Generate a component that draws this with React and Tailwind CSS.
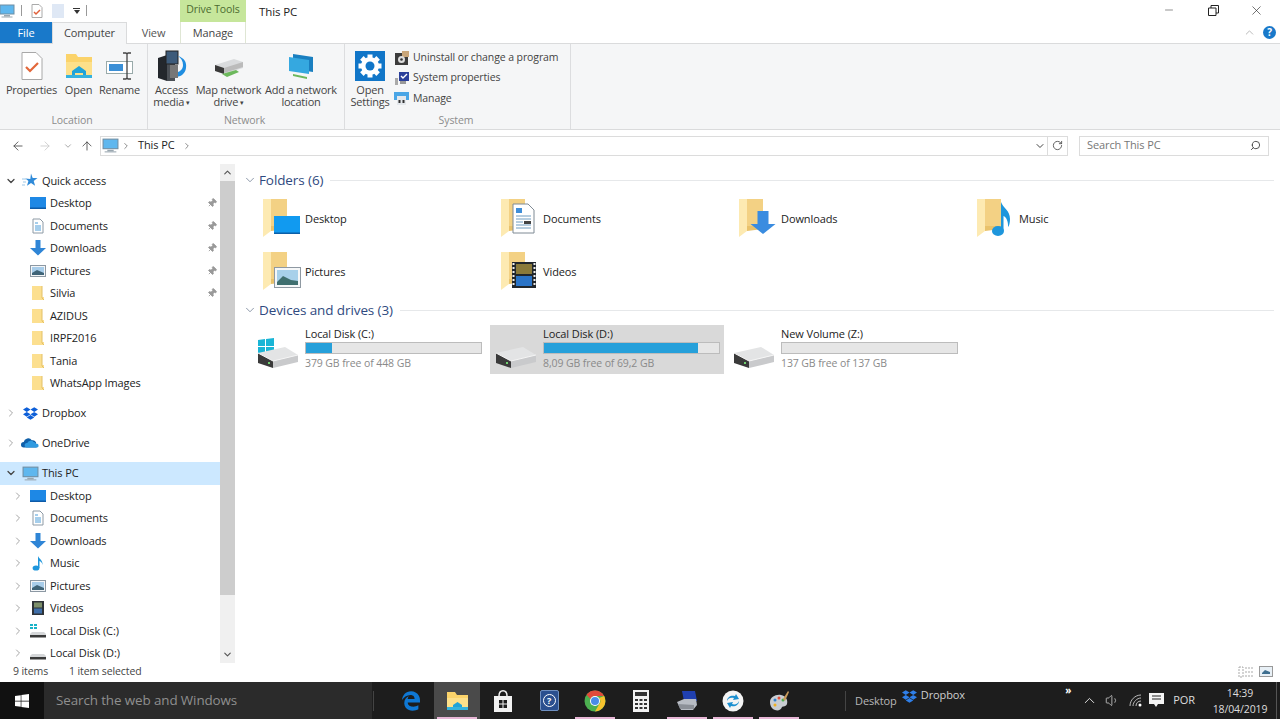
import React from 'react';
import { FaEdgeLegacy, FaDropbox, FaWindows } from 'react-icons/fa';
import { ChevronRight, ChevronDown, ChevronUp, ArrowLeft, ArrowRight, ArrowUp, RotateCw, Search, Pin, Minus, X, Volume1 } from 'lucide-react';

const Pc = ({ s = 16 }) => (
  <svg width={s} height={s} viewBox="0 0 16 16"><rect x="1" y="2" width="14" height="9" fill="#5fb7ee" stroke="#6f8ea3" /><rect x="5" y="12" width="6" height="1.5" fill="#9aa7b0" /><rect x="2.5" y="13.5" width="11" height="1" fill="#9aa7b0" /></svg>
);
const Desk = () => (
  <svg width="16" height="16" viewBox="0 0 16 16"><rect y="2" width="16" height="12" fill="#1e88e5" /><rect y="12.5" width="16" height="1.5" fill="#0d5aa7" /></svg>
);
const Doc = () => (
  <svg width="16" height="16" viewBox="0 0 16 16"><path d="M3 1h7l3 3v11H3z" fill="#fff" stroke="#8d9aa5" /><path d="M5 5h3M5 8h6M5 10h6M5 12h6" stroke="#4c9dd8" /></svg>
);
const Down = () => (
  <svg width="16" height="16" viewBox="0 0 16 16"><path d="M5.5 0h5v8H16l-8 7.5L0 8h5.5z" fill="#2f85d6" /></svg>
);
const Pict = () => (
  <svg width="16" height="16" viewBox="0 0 16 16"><rect x=".5" y="2.5" width="15" height="11" fill="#f4f6f8" stroke="#8c98a3" /><rect x="2" y="4" width="12" height="8" fill="#a8cdea" /><path d="M2 10l5-3 7 3v2H2z" fill="#3f6478" /></svg>
);
const Fold = () => (
  <svg width="16" height="16" viewBox="0 0 16 16"><path d="M2 1h10v11l2 0v3H2z" fill="#fcdf8f" /><path d="M12 1v12l2 2" fill="none" stroke="#e3c067" /></svg>
);
const Note = () => (
  <svg width="16" height="16" viewBox="0 0 16 16"><ellipse cx="6" cy="13" rx="3.4" ry="2.6" fill="#1e96dc" /><path d="M8 13V1c1 3 5 4 4.5 9-.5-3-2.5-4-3-4v7z" fill="#1e96dc" /></svg>
);
const Vid = () => (
  <svg width="16" height="16" viewBox="0 0 16 16"><rect x="2" y="1" width="12" height="14" fill="#2f3338" /><rect x="4" y="2.5" width="8" height="5" fill="#7d8f6a" /><rect x="4" y="8.5" width="8" height="5" fill="#3f6ea8" /></svg>
);
const SmallDisk = ({ win }) => (
  <svg width="16" height="16" viewBox="0 0 16 16">{win && <path d="M0 1h3v2H0zM4 1h3v2H4zM0 4h3v2H0zM4 4h3v2H4z" fill="#19b3c8" />}<path d="M2 9h12l2 2v3H0v-3z" fill="#d5d7d9" /><rect y="12" width="16" height="2.5" fill="#3a3a3a" /></svg>
);
const Star = () => (
  <svg width="16" height="16" viewBox="0 0 16 16"><path d="M9 .5l1.7 4.6L15.5 5l-3.8 3 1.4 4.8L9 10l-4 2.8 1.4-4.8-3-2.4 4.9.4z" fill="#2f8ad8" /><path d="M0 6h4M1 9h3M0 12h3" stroke="#9cc7e8" /></svg>
);
const OneD = () => (
  <svg width="20" height="14" viewBox="0 0 20 14"><path d="M3 12a3 3 0 0 1 0-6 5 5 0 0 1 9-2 4 4 0 0 1 5 4 2.2 2.2 0 0 1 0 4z" fill="#0f5fa8" /><path d="M6 12a2.5 2.5 0 0 1 1-5 4 4 0 0 1 7-1 3.5 3.5 0 0 1 3 2 2 2 0 0 1 1 4z" fill="#2f9ae0" /></svg>
);

const Folder = ({ children }) => (
  <svg width="48" height="48" viewBox="0 0 48 48" className="shrink-0">
    <path d="M11 4h17v30H11z" fill="#f3d184" />
    <path d="M4 4h8v32l-8 6z" fill="#fdeab2" />
    <path d="M12 36l16-2v-3H12z" fill="#e9c26b" />
    {children}
  </svg>
);
const BigDesktop = () => <Folder><rect x="15" y="21" width="26" height="18" fill="#119af0" /><rect x="15" y="37.5" width="26" height="1.5" fill="#0b5fa8" /></Folder>;
const BigDocs = () => <Folder><path d="M16 9h15l6 6v23H16z" fill="#fff" stroke="#7f8a94" /><path d="M19 13h6v5h-6z" fill="#3f8ed8" /><path d="M19 21h15M19 24h15M19 27h7M19 30h15M19 33h15" stroke="#6f9cc0" /><rect x="27" y="26" width="7" height="3" fill="#444" /></Folder>;
const BigDown = () => <Folder><path d="M18 16h11v13h7L23.500 39 11 29h7z" fill="#3a8ce0" transform="translate(4.500 0)" /></Folder>;
const BigMusic = () => <Folder><ellipse cx="25" cy="36" rx="6" ry="5" fill="#1e96dc" /><path d="M28 36V7c2 6 9 8 9 17 0 4-1 7-2 8 .5-6-2-10-4.500-11v15z" fill="#1e96dc" /></Folder>;
const BigPict = () => <Folder><rect x="15.500" y="19.500" width="26" height="20" fill="#f5f7f8" stroke="#8f99a2" /><rect x="18" y="22" width="21" height="15" fill="#a7d0ea" /><path d="M18 34l6-6 8 4 7 1v4H18z" fill="#3f6f6f" /></Folder>;
const BigVid = () => <Folder><rect x="15" y="14" width="24" height="26" fill="#20262c" /><rect x="19" y="16" width="16" height="10" fill="#8a7a3a" /><rect x="19" y="28" width="16" height="10" fill="#2a74c8" /><path d="M16.500 15v24M37.500 15v24" stroke="#eee" strokeWidth="2" strokeDasharray="2 2" /></Folder>;

const Drive = ({ win }) => (
  <svg width="48" height="48" viewBox="0 0 48 48" className="shrink-0">
    {win && <path d="M2 9l7-1v7H2zM10 8l8-1v8h-8zM2 16h7v7H2zM10 16h8v8l-8-1z" fill="#19b5d6" />}
    <path d="M2 22L29 16l13 8-25 6z" fill="#e3e4e5" />
    <path d="M2 22l15 8v7L2 32z" fill="#3a3a3a" />
    <path d="M17 30l25-6v7l-25 6z" fill="#c9cacc" />
    <path d="M2 22l15 8 25-6" fill="none" stroke="#f5f5f5" />
    <rect x="12" y="31" width="2" height="2" fill="#6fd06f" />
  </svg>
);

const Nav = ({ indent, icon, label, pin, arrow, active, h = 'h-[22.5px]' }) => (
  <div className={`flex items-center ${h} ${active ? 'bg-[#cce8ff]' : ''}`}>
    <div className={`shrink-0 flex justify-center text-[#a6a6a6] ${indent ? 'w-[36px] pl-0' : 'w-[21px]'}`}>
      {arrow === 'r' && <ChevronRight size={12} strokeWidth={2} />}
      {arrow === 'd' && <ChevronDown size={12} strokeWidth={2.5} className="text-[#444]" />}
    </div>
    <div className={`shrink-0 flex justify-center ${indent ? '-ml-[6px] w-[16px]' : 'w-[18px]'}`}>{icon}</div>
    <span className={`${indent ? 'ml-[4px]' : 'ml-[3px]'} flex-1 whitespace-nowrap`}>{label}</span>
    {pin && <Pin size={10} className="mr-[3px] text-[#9a9a9a] fill-[#9a9a9a] rotate-45" />}
  </div>
);

const RibbonBtn = ({ w, icon, lines, caret }) => (
  <div className="flex flex-col items-center shrink-0 leading-[12px] text-[#444] tracking-[-0.2px]" style={{ width: w }}>
    <div className="h-[36px] w-full flex items-center justify-center">{icon}</div>
    <div className="text-center whitespace-nowrap">{lines[0]}</div>
    {lines[1] && <div className="text-center whitespace-nowrap">{lines[1]}{caret && <span className="text-[7px] align-middle"> ▾</span>}</div>}
  </div>
);

const Group = ({ w, label, sep = true, children, cls = '' }) => (
  <div className={`flex flex-col shrink-0 h-full ${sep ? 'border-r border-[#dcdddf]' : ''}`} style={{ width: w }}>
    <div className={`flex flex-1 pt-[4px] ${cls}`}>{children}</div>
    <div className="h-[16px] text-center text-[#8c8c8c] text-[10.5px] pr-[3px]">{label}</div>
  </div>
);

const Section = ({ label }) => (
  <div className="flex items-center h-[20px]">
    <ChevronDown size={14} strokeWidth={1.3} className="text-[#6b7a90] ml-[2px] w-[14px]" />
    <span className="ml-[2px] text-[13.5px] text-[#2f4a80] whitespace-nowrap">{label}</span>
    <div className="flex-1 h-px bg-[#e6e8ea] ml-[7px]" />
  </div>
);

const Tile = ({ icon, label }) => (
  <div className="flex items-center w-[238px] h-[53px]">
    <div className="ml-[18px] w-[46px] h-[48px] flex items-center">{icon}</div>
    <span className="text-[#222]">{label}</span>
  </div>
);

const DriveTile = ({ win, label, free, pct, sel }) => (
  <div className={`flex w-[234px] mr-[4px] h-[49px] ${sel ? 'bg-[#d9d9d9]' : ''}`}>
    <div className="w-[53px] pl-[4px] pt-[6px] flex items-start"><Drive win={win} /></div>
    <div className="w-[177px]">
      <div className="leading-[18px] text-[#222] whitespace-nowrap">{label}</div>
      <div className="h-[12px] border border-[#bcbcbc] bg-[#e6e6e6] -mt-[1px]">
        <div className="h-full bg-[#26a0da]" style={{ width: pct + '%' }} />
      </div>
      <div className="leading-[16px] mt-[1px] text-[10.5px] text-[#8a8a8a] whitespace-nowrap">{free}</div>
    </div>
  </div>
);

const Chrome = () => (
  <svg width="22" height="22" viewBox="0 0 22 22">
    <circle cx="11" cy="11" r="10.5" fill="#4caf50" />
    <path d="M11 .5A10.5 10.5 0 0 1 20.1 6H11a5 5 0 0 0-4.6 3L2.5 4.8A10.5 10.5 0 0 1 11 .5z" fill="#e04a3a" />
    <path d="M20.1 6A10.5 10.5 0 0 1 11 21.5L15 14.6A5 5 0 0 0 15 8z" fill="#f6c22d" />
    <circle cx="11" cy="11" r="5" fill="#fff" /><circle cx="11" cy="11" r="4" fill="#4a8be8" />
  </svg>
);

const TaskIcon = ({ children, active, pink }) => (
  <div className={`relative w-[46px] h-full flex items-center justify-center shrink-0 ${active ? 'bg-[#4a4a4a]' : ''}`}>
    {children}
    {pink && <div className="absolute bottom-0 left-[3px] right-[3px] h-[2px] bg-[#e7b6d6]" />}
  </div>
);

export default function App() {
  return (
    <div className="w-[1280px] h-[719px] overflow-hidden flex flex-col bg-white font-['Open_Sans',sans-serif] text-[11px] tracking-[-0.1px] text-[#222]">
      {/* Title bar */}
      <div className="h-[22px] flex items-start shrink-0">
        <div className="w-[16px] pt-[3px] -ml-[1px]"><Pc /></div>
        <div className="w-px h-[11px] bg-[#999] mt-[5px] ml-[6px]" />
        <svg width="12" height="14" viewBox="0 0 12 14" className="ml-[9px] mt-[4px]"><path d="M1 .5h7l3 3v10H1z" fill="#fff" stroke="#aaa" /><path d="M3 8l2 2 4-4" fill="none" stroke="#e0603a" strokeWidth="1.5" /></svg>
        <div className="w-[12px] h-[14px] bg-[#dfe8f5] ml-[9px] mt-[4px]" />
        <div className="ml-[9px] mt-[8px] w-[7px] flex flex-col items-center"><div className="w-[7px] h-px bg-[#333]" /><div className="mt-[1px] w-0 h-0 border-x-[3.5px] border-x-transparent border-t-[4px] border-t-[#333]" /></div>
        <div className="w-px h-[11px] bg-[#999] ml-[6px] mt-[5px]" />
        <div className="ml-[93px] w-[66px] h-[22px] bg-[#c6e69b] text-center leading-[19px] text-[#4b6b30] text-[10.5px]">Drive Tools</div>
        <div className="ml-[13px] pt-[3px] text-[11.5px] text-[#222] flex-1">This PC</div>
        <div className="flex items-center h-[20px] text-[#222]">
          <Minus size={12} strokeWidth={1} className="mr-[33px]" />
          <svg width="11" height="11" viewBox="0 0 11 11" className="mr-[30px]"><path d="M.5 3h7.500v7.500H.5zM3 3V.5h7.500V8H8" fill="none" stroke="#222" /></svg>
          <X size={15} strokeWidth={1} className="mr-[16px]" />
        </div>
      </div>
      {/* Tabs */}
      <div className="h-[22px] flex items-stretch shrink-0 border-b border-[#dadbdc]">
        <div className="w-[52px] bg-[#1979ca] text-white text-center leading-[21px]">File</div>
        <div className="w-[75px] h-[22px] bg-[#f5f6f7] border-x border-t border-[#dadbdc] text-center leading-[20px] text-[#444]">Computer</div>
        <div className="w-[53px] text-center leading-[21px] text-[#555]">View</div>
        <div className="w-[66px] border-x border-[#dfe6d4] text-center leading-[21px] text-[#444]">Manage</div>
        <div className="flex-1 flex justify-end items-center">
          <ChevronUp size={13} strokeWidth={1.5} className="text-[#aaa] mr-[7px]" />
          <div className="w-[13px] h-[13px] mr-[4px] rounded-full bg-[#1979ca] text-white text-[10px] font-bold flex items-center justify-center">?</div>
        </div>
      </div>
      {/* Ribbon */}
      <div className="h-[86px] bg-[#f5f6f7] border-b border-[#dadbdc] flex shrink-0">
        <Group w={148} label="Location">
          <div className="flex pl-[5px]">
            <RibbonBtn w={53} lines={['Properties']} icon={<svg width="22" height="28" viewBox="0 0 22 28"><path d="M1 .5h14l6 6v21H1z" fill="#fff" stroke="#a8a8a8" /><path d="M5 15l4 4 8-8" fill="none" stroke="#e2673a" strokeWidth="2.2" /></svg>} />
            <RibbonBtn w={41} lines={['Open']} icon={<svg width="28" height="28" viewBox="0 0 28 28"><path d="M1 2h10l2 3h14v20H1z" fill="#fbd36a" /><path d="M1 10h26v15H1z" fill="#fde08a" /><path d="M7 25v-6l7-5 7 5v6h-3v-4h-8v4z" fill="#1fa3d9" /><rect x="1" y="23" width="26" height="3" fill="#34b2de" /></svg>} />
            <RibbonBtn w={41} lines={['Rename']} icon={<svg width="28" height="28" viewBox="0 0 28 28"><rect x=".5" y="9.500" width="26" height="12" fill="#fff" stroke="#9aa" /><rect x="3" y="12" width="14" height="7" fill="#3a8fd6" /><path d="M17 1h3l1 1 1-1h3M21 2v24M17 27h3l1-1 1 1h3" fill="none" stroke="#444" strokeWidth="1.3" /></svg>} />
          </div>
        </Group>
        <Group w={197} label="Network">
          <div className="flex">
            <RibbonBtn w={47} lines={['Access', 'media']} caret icon={<svg width="30" height="32" viewBox="0 0 30 32"><path d="M1 8l9-3v26l-9-3z" fill="#23272c" /><path d="M10 5l8 2v24l-8 0z" fill="#4a4f55" /><rect x="9" y="1" width="12" height="13" fill="#3d5b7a" stroke="#222" /><path d="M14 22c6 2 12-1 12-7 0-4-2-7-5-9 6 2 9 6 8 12-1 7-7 10-15 9z" fill="#1f8de0" /><rect x="13" y="15" width="8" height="13" fill="#777" /></svg>} />
            <RibbonBtn w={67} lines={['Map network', 'drive']} caret icon={<svg width="30" height="26" viewBox="0 0 30 26"><path d="M1 12L20 6l9 3v6L10 21 1 18z" fill="#d9dbdd" /><path d="M1 12l9 3v6l-9-3z" fill="#3a3a3a" /><path d="M10 15l19-6v5L10 20z" fill="#bbb" /><path d="M8 21l14-4 3 2-12 5z" fill="#6cb85c" /></svg>} />
            <RibbonBtn w={78} lines={['Add a network', 'location']} icon={<svg width="28" height="28" viewBox="0 0 28 28"><path d="M6 2l20 3v15L6 17z" fill="#1a7fc0" /><path d="M2 5l20 3v14L2 19z" fill="#35a8e0" /><path d="M6 22l14 3v2L6 24z" fill="#6cb85c" /></svg>} />
          </div>
        </Group>
        <Group w={226} label="System">
          <div className="flex pl-[2px]">
            <RibbonBtn w={46} lines={['Open', 'Settings']} icon={<svg width="30" height="30" viewBox="0 0 30 30"><rect width="30" height="30" fill="#1176c8" /><g fill="#fff">{[0, 45, 90, 135, 180, 225, 270, 315].map(a => <rect key={a} x="12.500" y="3.500" width="5" height="5" transform={`rotate(${a} 15 15)`} />)}<circle cx="15" cy="15" r="9" /></g><circle cx="15" cy="15" r="4.500" fill="#1176c8" /></svg>} />
            <div className="flex flex-col ml-[1px] text-[#444] text-[10.5px]">
              <div className="flex items-center h-[21px] -mt-[1px]"><svg width="16" height="16" viewBox="0 0 16 16"><rect x="1" y="3" width="13" height="12" fill="#3c3c3c" /><path d="M8 1h7v6H8z" fill="#c9a67a" /><circle cx="7.500" cy="9.500" r="3.500" fill="#ddd" /><circle cx="7.500" cy="9.500" r="1.300" fill="#333" /></svg><span className="ml-[3px] whitespace-nowrap">Uninstall or change a program</span></div>
              <div className="flex items-center h-[20.5px]"><svg width="16" height="16" viewBox="0 0 16 16"><rect x="5" y="2" width="10" height="9" fill="#2a3f9a" /><path d="M7 6l2 2 4-4" fill="none" stroke="#fff" strokeWidth="1.4" /><rect x="1" y="8" width="3" height="7" fill="#a9a9a9" /><rect x="6" y="11" width="6" height="3" fill="#999" /></svg><span className="ml-[3px] whitespace-nowrap">System properties</span></div>
              <div className="flex items-center h-[20.5px]"><svg width="16" height="16" viewBox="0 0 16 16"><rect x="0" y="1" width="15" height="8" fill="#4aa6e6" /><rect x="3" y="5" width="9" height="9" fill="#e4e8ec" /><rect x="4.500" y="9" width="2" height="3" fill="#333" /><rect x="8.500" y="9" width="2" height="3" fill="#333" /></svg><span className="ml-[3px] whitespace-nowrap">Manage</span></div>
            </div>
          </div>
        </Group>
      </div>
      {/* Address */}
      <div className="h-[31px] flex items-center shrink-0">
        <ArrowLeft size={14} strokeWidth={1.4} className="ml-[11px] text-[#444]" />
        <ArrowRight size={14} strokeWidth={1.4} className="ml-[13px] text-[#c8c8c8]" />
        <ChevronDown size={10} strokeWidth={2} className="ml-[11px] text-[#999]" />
        <ArrowUp size={14} strokeWidth={1.4} className="ml-[7px] text-[#444]" />
        <div className="ml-[6px] w-[968px] h-[20px] border border-[#dcdcdc] flex items-center">
          <div className="ml-[1px]"><Pc s={17} /></div>
          <ChevronRight size={10} className="ml-[2px] text-[#777]" />
          <span className="ml-[7px] text-[#222]">This PC</span>
          <ChevronRight size={10} className="ml-[7px] text-[#777]" />
          <div className="flex-1" />
          <ChevronDown size={12} strokeWidth={2} className="text-[#444] mr-[1px]" />
          <div className="w-[20px] h-full border-l border-[#dcdcdc] flex items-center justify-center"><RotateCw size={11} className="text-[#555]" /></div>
        </div>
        <div className="ml-[11px] w-[190px] h-[20px] border border-[#dcdcdc] flex items-center px-[7px] text-[#777] justify-between">
          <span>Search This PC</span>
          <Search size={11} className="text-[#444] -scale-x-100" />
        </div>
      </div>
      {/* Main */}
      <div className="flex-1 flex min-h-0">
        <div className="w-[220px] shrink-0 pt-[8.5px] overflow-hidden text-[#222]">
          <Nav arrow="d" icon={<Star />} label="Quick access" />
          <Nav indent icon={<Desk />} label="Desktop" pin />
          <Nav indent icon={<Doc />} label="Documents" pin />
          <Nav indent icon={<Down />} label="Downloads" pin />
          <Nav indent icon={<Pict />} label="Pictures" pin />
          <Nav indent icon={<Fold />} label="Silvia" pin />
          <Nav indent icon={<Fold />} label="AZIDUS" />
          <Nav indent icon={<Fold />} label="IRPF2016" />
          <Nav indent icon={<Fold />} label="Tania" />
          <Nav indent icon={<Fold />} label="WhatsApp Images" />
          <div className="h-[7.5px]" />
          <Nav arrow="r" icon={<FaDropbox size={15} className="text-[#0d5fd8]" />} label="Dropbox" />
          <div className="h-[7.5px]" />
          <Nav arrow="r" icon={<OneD />} label="OneDrive" />
          <div className="h-[7.5px]" />
          <Nav arrow="d" active icon={<Pc s={17} />} label="This PC" />
          <Nav indent arrow="r" icon={<Desk />} label="Desktop" />
          <Nav indent arrow="r" icon={<Doc />} label="Documents" />
          <Nav indent arrow="r" icon={<Down />} label="Downloads" />
          <Nav indent arrow="r" icon={<Note />} label="Music" />
          <Nav indent arrow="r" icon={<Pict />} label="Pictures" />
          <Nav indent arrow="r" icon={<Vid />} label="Videos" />
          <Nav indent arrow="r" icon={<SmallDisk win />} label="Local Disk (C:)" />
          <Nav indent arrow="r" icon={<SmallDisk />} label="Local Disk (D:)" />
        </div>
        <div className="w-[15px] shrink-0 h-[499px] mt-[3px] ml-0 flex flex-col bg-[#f0f0f0]">
          <div className="h-[17px] flex items-center justify-center"><ChevronUp size={11} strokeWidth={2.5} className="text-[#555]" /></div>
          <div className="h-[414px] bg-[#cdcdcd]" />
          <div className="flex-1" />
          <div className="h-[17px] flex items-center justify-center"><ChevronDown size={11} strokeWidth={2.5} className="text-[#555]" /></div>
        </div>
        <div className="flex-1 pl-[6px] pt-[9px] pr-[6px] min-w-0">
          <Section label="Folders (6)" />
          <div className="flex flex-wrap mt-[2.5px] w-[960px]">
            <Tile icon={<BigDesktop />} label="Desktop" />
            <Tile icon={<BigDocs />} label="Documents" />
            <Tile icon={<BigDown />} label="Downloads" />
            <Tile icon={<BigMusic />} label="Music" />
            <Tile icon={<BigPict />} label="Pictures" />
            <Tile icon={<BigVid />} label="Videos" />
          </div>
          <div className="mt-[1.5px]"><Section label="Devices and drives (3)" /></div>
          <div className="flex mt-[5px] ml-[11px]">
            <DriveTile win label="Local Disk (C:)" free="379 GB free of 448 GB" pct={15} />
            <DriveTile sel label="Local Disk (D:)" free="8,09 GB free of 69,2 GB" pct={88} />
            <DriveTile label="New Volume (Z:)" free="137 GB free of 137 GB" pct={0} />
          </div>
        </div>
      </div>
      {/* Status */}
      <div className="h-[22px] shrink-0 flex items-center text-[#444] text-[10.5px] pl-[13px] pt-[1px]">
        <span className="w-[56px]">9 items</span>
        <span className="flex-1">1 item selected</span>
        <svg width="16" height="12" viewBox="0 0 16 12"><path d="M1 1h4v10H1zM7 2h8M7 6h8M7 10h8" fill="none" stroke="#a9a9a9" strokeDasharray="2 1" /></svg>
        <svg width="14" height="11" viewBox="0 0 14 11" className="ml-[5px] mr-[7px]"><rect x=".5" y=".5" width="13" height="10" fill="#e8f0f6" stroke="#999" /><path d="M3 7l3-3 5 2v2H3z" fill="#3f6f8f" /></svg>
      </div>
      {/* Taskbar */}
      <div className="h-[37px] shrink-0 bg-[#1d1d1d] flex items-center text-[#cfcfcf]">
        <div className="w-[44px] h-full bg-[#111] flex items-center justify-center"><FaWindows size={16} className="text-white" /></div>
        <div className="w-[328px] h-full bg-[#2b2b2b] flex items-center pl-[12px] text-[13.4px] text-[#8f8f8f] whitespace-nowrap">Search the web and Windows</div>
        <div className="w-px h-[20px] bg-[#444] ml-[1px]" />
        <div className="flex h-full ml-[14px]">
          <TaskIcon><FaEdgeLegacy size={20} className="text-[#0f78d4]" /></TaskIcon>
          <TaskIcon active pink><svg width="21" height="20" viewBox="0 0 21 20"><path d="M0 1h8l2 3h11v15H0z" fill="#fbd36a" /><path d="M0 7h21v12H0z" fill="#fde08a" /><path d="M6 19v-5l4.500-3 4.500 3v5z" fill="#1fa3d9" /><rect y="16" width="21" height="3" fill="#35b3dd" /></svg></TaskIcon>
          <TaskIcon><svg width="20" height="22" viewBox="0 0 20 22"><path d="M1 6h18v16H1z" fill="#f2f2f2" /><path d="M6 6c0-7 8-7 8 0" fill="none" stroke="#f2f2f2" strokeWidth="1.5" /><path d="M6 10h3.500v3.500H6zM10.500 10H14v3.500h-3.500zM6 14.500h3.500V18H6zM10.500 14.500H14V18h-3.500z" fill="#1d1d1d" /></svg></TaskIcon>
          <TaskIcon><div className="w-[19px] h-[21px] bg-[#2a4f8f] border border-[#6f8fc0] flex items-center justify-center text-[11px] text-white font-bold rounded-[2px]"><span className="w-[13px] h-[13px] rounded-full border border-white flex items-center justify-center text-[9px]">?</span></div></TaskIcon>
          <TaskIcon pink><Chrome /></TaskIcon>
          <TaskIcon><svg width="16" height="22" viewBox="0 0 16 22"><rect width="16" height="22" fill="#f2f2f2" /><rect x="2" y="2" width="12" height="4" fill="#333" /><path d="M2 9h3v2H2zM6.500 9h3v2h-3zM11 9h3v2h-3zM2 13h3v2H2zM6.500 13h3v2h-3zM11 13h3v2h-3zM2 17h3v2H2zM6.500 17h3v2h-3zM11 17h3v2h-3z" fill="#333" /></svg></TaskIcon>
          <TaskIcon pink><svg width="22" height="22" viewBox="0 0 22 22"><path d="M6 1h13l2 10H8z" fill="#2040b0" /><path d="M1 12l7-3h12l1 6-4 5H5z" fill="#b8bcc4" /><path d="M2 14l16 1v4H4z" fill="#8c9098" /></svg></TaskIcon>
          <TaskIcon pink><svg width="22" height="22" viewBox="0 0 22 22"><circle cx="11" cy="11" r="10.500" fill="#f4f4f4" /><path d="M5 11c0-4 4-6 8-5l1-2 3 5-6 1 1-2c-3-1-6 0-7 3zM17 11c0 4-4 6-8 5l-1 2-3-5 6-1-1 2c3 1 6 0 7-3z" fill="#1b8fd0" /></svg></TaskIcon>
          <TaskIcon pink><svg width="22" height="22" viewBox="0 0 22 22"><path d="M2 12c0-5 6-8 11-7 5 1 7 5 6 9-1 3-4 2-5 3-1 3-4 4-7 3-3-1-5-4-5-8z" fill="#c9cdd2" /><circle cx="7" cy="10" r="1.500" fill="#2f80d0" /><circle cx="11" cy="8" r="1.500" fill="#e0503a" /><circle cx="15" cy="10" r="1.500" fill="#4caf50" /><circle cx="7" cy="15" r="1.500" fill="#f0b020" /><path d="M15 9l5-8 1 1-4 9z" fill="#c89a5a" /></svg></TaskIcon>
        </div>
        <div className="w-px h-[20px] bg-[#444] ml-[43px]" />
        <span className="ml-[9px] text-[#b8b8b8] mt-[1px]">Desktop</span>
        <FaDropbox size={15} className="ml-[5px] -mt-[9px] text-[#2f7fe8]" />
        <span className="ml-[4px] text-[#cfcfcf] -mt-[10px]">Dropbox</span>
        <div className="flex-1" />
        <span className="-mt-[20px] text-[10px] text-white font-bold">»</span>
        <ChevronUp size={17} strokeWidth={1.2} className="ml-[10px] text-white" />
        <Volume1 size={15} strokeWidth={1.2} className="ml-[7px] text-[#ddd]" />
        <svg width="14" height="13" viewBox="0 0 14 13" className="ml-[9px]"><path d="M1 12C1 6 6 1 12 1M4 12C4 8 8 4 12 4M7 12c0-3 2-5 5-5" fill="none" stroke="#bbb" /><circle cx="11" cy="11" r="1.500" fill="#fff" /></svg>
        <svg width="15" height="15" viewBox="0 0 15 15" className="ml-[6px]"><path d="M0 0h15v11H9l-2 3-2-3H0z" fill="#f4f4f4" /><path d="M3 3h9M3 6h9" stroke="#222" /></svg>
        <span className="ml-[9px] text-[#ddd]">POR</span>
        <div className="ml-[17px] text-center leading-[16px] text-[#ddd] w-[56px] text-[10.5px]">
          <div>14:39</div>
          <div>18/04/2019</div>
        </div>
        <div className="w-px h-full bg-[#555] ml-[8px] mr-[3px]" />
      </div>
    </div>
  );
}
